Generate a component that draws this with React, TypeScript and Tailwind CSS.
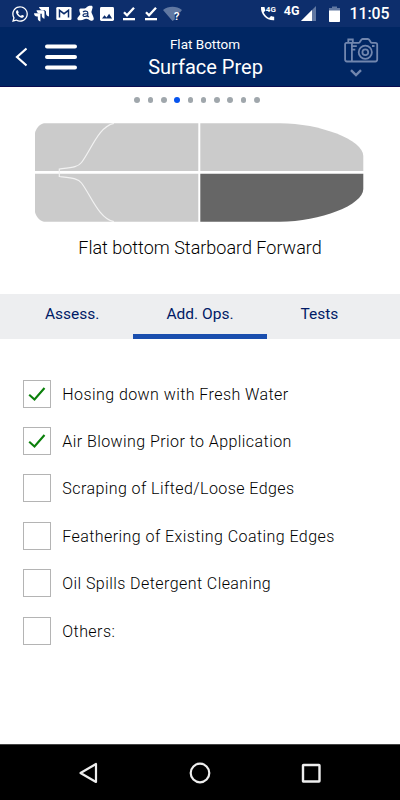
import { useState } from 'react';
import { FaWhatsapp } from 'react-icons/fa';

interface IOperation {
  id: string;
  title: string;
  checked: boolean;
}

const initialOperations: IOperation[] = [
  { id: 'hosing', title: 'Hosing down with Fresh Water', checked: true },
  { id: 'blowing', title: 'Air Blowing Prior to Application', checked: true },
  { id: 'scraping', title: 'Scraping of Lifted/Loose Edges', checked: false },
  { id: 'feathering', title: 'Feathering of Existing Coating Edges', checked: false },
  { id: 'oil', title: 'Oil Spills Detergent Cleaning', checked: false },
  { id: 'others', title: 'Others:', checked: false },
];

const tabs = ['Assess.', 'Add. Ops.', 'Tests'];
const pageCount = 10;
const currentPage = 3;

const DownloadDone = () => (
  <svg viewBox="0 0 14 16" className="h-4 w-[14px] shrink-0">
    <path d="M2 6.3l3 3L12 1.8" fill="none" stroke="#fff" strokeWidth="2.3" />
    <path d="M1 12h12v2.3H1z" fill="#fff" />
  </svg>
);

const StatusBar = () => (
  <div className="flex h-[27px] w-full items-center bg-[#0d2e6c] px-[11px] text-white">
    <FaWhatsapp className="h-[18px] w-[18px] shrink-0" />
    <svg viewBox="0 0 15 16" className="ml-[5px] h-4 w-[15px] shrink-0" fill="#fff">
      <path d="M5 1h10v9.500c-2.200-.4-3-1.600-3-3.500V5.600L10.800 4.200H9C6.800 4.200 5.500 3 5 1z" />
      <path d="M2.500 4.200h6.800l1.200 1.300v7.200c-2-.4-2.700-1.500-2.700-3.200V7.700H6C4 7.700 2.800 6.500 2.500 4.200z" />
      <path d="M0 7.300h6.400v8.200c-1.800-.4-2.600-1.500-2.600-3.200v-1.700H2.900C1.300 10.600.2 9.400 0 7.300z" />
    </svg>
    <svg viewBox="0 0 16 13" className="ml-[7px] h-[13px] w-4 shrink-0">
      <rect x=".3" width="15.2" height="13" rx="1.3" fill="#fff" />
      <path d="M3.500 10.500V3.300L8 6.700l4.500-3.400v7.200" fill="none" stroke="#0d2e6c" strokeWidth="1.5" />
    </svg>
    <svg viewBox="0 0 17 17" className="ml-[5px] h-[17px] w-[17px] shrink-0">
      <path
        d="M3.500 3.500h4.200C9.500 3.300 10.200.8 12.500.8h1.600c1.400 0 1.700 1 1.400 2.200L14.400 7c0 1.500 2.400 4.500 2.400 6.800 0 1.700-1.800 2.200-3.300 1.600-1.700-.7-2.700-1.700-4.300-1.700-1.700 0-3.200 1.500-5.300 1.500H2c-1.500 0-2.200-1.500-1.200-2.700l2.400-3c.5-.7-.9-2.500-.9-4.200 0-1 .4-1.700 1.200-1.800z"
        fill="#fff"
      />
      <path
        d="M6 7c1.200-1.200 4.800-1.200 4.800.8v3.500c.3.400.8.400 1.200.1M10.800 8.800C8.500 8.600 6 8.800 6 10.300c0 1.600 3.500 1.600 4.800-.2"
        fill="none"
        stroke="#0d2e6c"
        strokeWidth="1.2"
      />
    </svg>
    <svg viewBox="0 0 14 14" className="ml-[6px] h-[14px] w-[14px] shrink-0">
      <rect width="14" height="14" rx="1.4" fill="#fff" />
      <path d="M2 11.500l2.500-3.300 2 2.200 2.600-3.600 3 4.700z" fill="#0d2e6c" />
    </svg>
    <div className="ml-2 flex gap-2">
      <DownloadDone />
      <DownloadDone />
    </div>
    <div className="relative ml-[5px] h-4 w-[19px] shrink-0">
      <svg viewBox="0 0 19 16" className="h-4 w-[19px]">
        <path d="M0 4C5.500-.4 13.500-.4 19 4l-2 2.500c-3-1.200-5.500.8-5.200 3.500v3.500L9.500 15z" fill="#6178a2" />
      </svg>
      <span className="absolute left-[11px] top-[5px] text-[11px] font-bold leading-[12px]">?</span>
    </div>

    <div className="relative ml-auto h-[17px] w-[17px] shrink-0">
      <svg viewBox="0 0 17 17" className="h-[17px] w-[17px]">
        <path
          d="M1 2h3.500c.3 1.500.5 2.500.9 3.600L3.700 7.500c1.300 2.500 3 4.200 5.400 5.500l1.900-1.900c1.100.4 2 .6 3.200.7v3.400C6.500 15.700.5 9.500 1 2z"
          fill="#fff"
        />
      </svg>
      <span className="absolute left-[6px] top-px text-[8px] font-bold leading-[8px]">4G</span>
    </div>
    <span className="mb-[5px] ml-[7px] text-[12.5px] font-bold leading-[12px]">4G</span>
    <svg viewBox="0 0 15 15" className="ml-px h-[15px] w-[15px] shrink-0">
      <path d="M0 15L15 0v15z" fill="#6178a2" />
      <path d="M0 15L11 4v11z" fill="#fff" />
    </svg>
    <svg viewBox="0 0 11 16" className="ml-[13px] h-4 w-[11px] shrink-0">
      <path d="M3 .5h5V2h3v3H0V2h3z" fill="#6178a2" />
      <path d="M0 4.500h11V15c0 .6-.3 1-1 1H1c-.7 0-1-.4-1-1z" fill="#fff" />
    </svg>
    <span className="ml-[10px] w-[39.5px] whitespace-nowrap pt-px text-[15.8px] font-medium leading-5">11:05</span>
  </div>
);

const Header = () => (
  <header className="grid h-[60px] grid-cols-[100px_1fr_100px] border-b border-[#0a0b50] bg-[#002663] text-white">
    <div className="flex items-center pl-[14.5px]">
      <svg viewBox="0 0 12 20" className="h-5 w-3" fill="none" stroke="#fff" strokeWidth="2.2">
        <path d="M11.500 1.500L2 10l9.500 8.500" />
      </svg>
      <svg viewBox="0 0 32 26" className="ml-[18.5px] h-[26px] w-8" stroke="#fff" strokeWidth="4" strokeLinecap="round">
        <path d="M2 2.500h28M2 13h28M2 23.500h28" />
      </svg>
    </div>
    <div className="flex flex-col items-center text-center">
      <p className="ml-[10px] mt-[9px] whitespace-nowrap text-[13.5px] leading-4">Flat Bottom</p>
      <h1 className="ml-[11px] mt-[3px] whitespace-nowrap text-[20px] leading-6">Surface Prep</h1>
    </div>
    <div className="flex flex-col items-center pl-[22px] pt-[10px]">
      <svg viewBox="0 0 36 28" className="h-7 w-9" fill="none" stroke="#7186ae" strokeWidth="1.8">
        <path d="M3.500 5.800h12.300c1.700 0 1.700-3.800 3.700-3.800h5.500c2 0 2 3.800 3.700 3.800h3.600c1.200 0 1.900.8 1.900 1.800v15c0 1.200-.8 1.900-1.900 1.900H4c-1.200 0-1.900-.8-1.900-1.900v-15c0-1 .6-1.800 1.400-1.800z" />
        <path d="M5.300 5.600V2.500h4.500v3.100M8.900 6v18.500M9 9.200h4.800M9 12.700h3.300M29 9h2.500" />
        <circle cx="22.3" cy="15.2" r="6.6" />
        <circle cx="22.3" cy="15.2" r="2.9" />
      </svg>
      <svg viewBox="0 0 12 8" className="mr-[11px] mt-[4px] h-2 w-3" fill="none" stroke="#7186ae" strokeWidth="2.4">
        <path d="M1 1.200l5 4.800 5-4.800" />
      </svg>
    </div>
  </header>
);

const PageDots = () => (
  <div className="flex h-[26px] items-center justify-center pr-[6px]">
    {Array.from({ length: pageCount }, (_, i) => (
      <span key={i} className="flex w-[13.3px] justify-center">
        <span
          className={
            i === currentPage
              ? 'h-[6.5px] w-[6.5px] rounded-full bg-[#0653ee]'
              : 'h-[5.6px] w-[5.6px] rounded-full bg-[#a0a7ac]'
          }
        />
      </span>
    ))}
  </div>
);

// hull seen from below, the starboard forward quarter is selected
const HullDiagram = () => (
  <svg viewBox="0 0 329 99" className="ml-[35px] h-[99px] w-[329px]">
    <path d="M9 .3h154.300v47.700H0V10C1 5.500 4.500 1.300 9 .3z" fill="#cbcbcb" />
    <path d="M165.300.3h79.700c40 0 83.300 16.700 83.300 32.700v15h-163z" fill="#cbcbcb" />
    <path d="M0 50.800h163.300v47.900H9C4.500 97.700 1 93.500 0 89z" fill="#cbcbcb" />
    <path d="M165.300 50.800h163v15.200c0 16-43.300 32.700-83.300 32.700h-79.700z" fill="#666" />
    <path
      d="M79 .3C64 3 56 27 46.500 39.500 43 44 38 44.300 24.300 46v7.500C38 55.200 43 55.500 46.500 60 56 72.500 64 96 79 98.700"
      fill="none"
      stroke="#f2f2f2"
      strokeWidth="1.2"
    />
  </svg>
);

const OperationItem = ({ operation, onToggle }: { operation: IOperation; onToggle: (id: string) => void }) => (
  <label className="flex h-[47.4px] items-center">
    <input type="checkbox" checked={operation.checked} onChange={() => onToggle(operation.id)} className="sr-only" />
    <span className="flex h-7 w-7 shrink-0 items-center justify-center border border-[#b4b4b4] bg-white">
      {operation.checked && (
        <svg viewBox="0 0 18 14" className="h-[14px] w-[18px]" fill="none" stroke="#0b800b" strokeWidth="2.1">
          <path d="M1.200 7.800l5.300 4.700L16.500 1" />
        </svg>
      )}
    </span>
    <span className="ml-[11.8px] whitespace-nowrap pt-[2px] text-[16px] font-light leading-6 tracking-[0.43px]">
      {operation.title}
    </span>
  </label>
);

const App = () => {
  const [operations, setOperations] = useState(initialOperations);
  const [activeTab, setActiveTab] = useState('Add. Ops.');

  const toggleOperation = (id: string) =>
    setOperations((prev) => prev.map((op) => (op.id === id ? { ...op, checked: !op.checked } : op)));

  return (
    <div className="flex h-[800px] w-[400px] flex-col overflow-hidden bg-white font-['Roboto',sans-serif] text-black">
      <StatusBar />
      <Header />
      <PageDots />
      <div className="mt-[10px]">
        <HullDiagram />
      </div>
      <h2 className="mt-[14px] text-center text-[18px] font-light leading-6">Flat bottom Starboard Forward</h2>

      <nav className="mt-[34px] flex h-[45px] bg-[#edeef0]">
        {tabs.map((tab) => (
          <button
            key={tab}
            onClick={() => setActiveTab(tab)}
            className={`w-1/3 border-b-[5px] pt-[2px] text-[15.5px] text-[#001a66] ${
              tab === activeTab ? 'border-[#1a4eae]' : 'border-transparent'
            } ${tab === 'Assess.' ? 'pl-[11px]' : ''} ${tab === 'Tests' ? 'pr-[28px]' : ''}`}
          >
            {tab}
          </button>
        ))}
      </nav>

      <main className="flex-1 pl-[22.5px] pt-[31px]">
        {operations.map((operation) => (
          <OperationItem key={operation.id} operation={operation} onToggle={toggleOperation} />
        ))}
      </main>

      <footer className="flex h-14 items-center justify-between border-t border-[#444] bg-black pl-[78px] pr-[79px] pt-px">
        <svg viewBox="0 0 20 22" className="h-[22px] w-5" fill="none" stroke="#eee" strokeWidth="2.2">
          <path d="M18 2v18L2.500 11z" strokeLinejoin="round" />
        </svg>
        <svg viewBox="0 0 22 22" className="h-[22px] w-[22px]" fill="none" stroke="#eee" strokeWidth="2.2">
          <circle cx="11" cy="11" r="9.3" />
        </svg>
        <svg viewBox="0 0 20 20" className="h-5 w-5" fill="none" stroke="#eee" strokeWidth="2.4">
          <rect x="2" y="2" width="16.5" height="16.5" rx=".5" />
        </svg>
      </footer>
    </div>
  );
};

export default App;
